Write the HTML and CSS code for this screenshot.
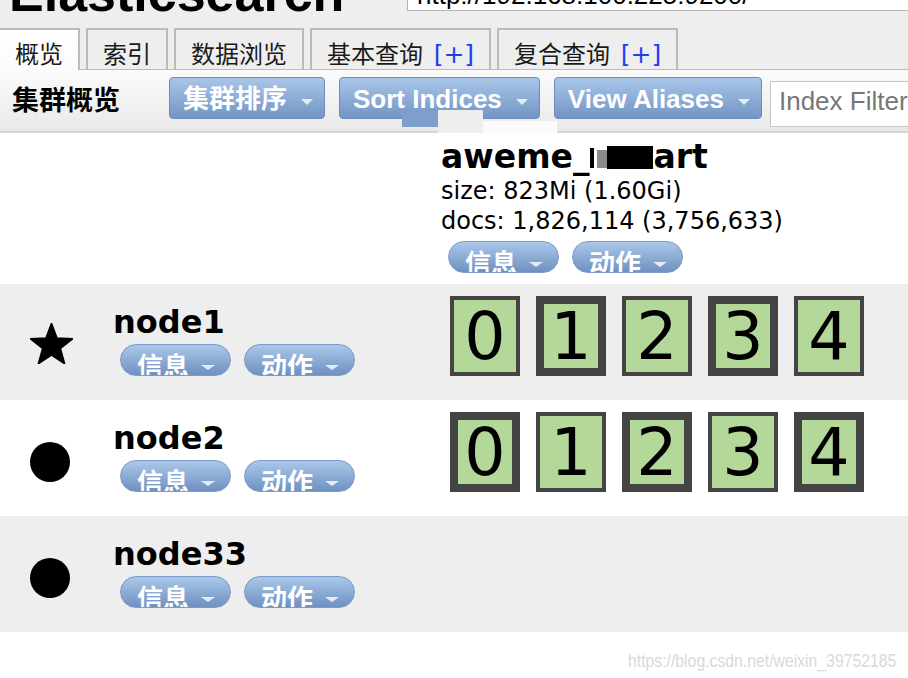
FILE: index.html
```html
<!DOCTYPE html>
<html lang="zh">
<head>
<meta charset="utf-8">
<title>Elasticsearch Head</title>
<link rel="stylesheet" href="styles.css">
</head>
<body>
<div class="app">
  <header class="top">
    <h1 class="title">Elasticsearch</h1>
    <div class="cluster-url">http://192.168.100.225:9200/</div>
  </header>

  <nav class="tabs">
    <div class="tab active">概览</div>
    <div class="tab">索引</div>
    <div class="tab">数据浏览</div>
    <div class="tab">基本查询 <span class="plus">[+]</span></div>
    <div class="tab">复合查询 <span class="plus">[+]</span></div>
  </nav>

  <div class="toolbar">
    <h2 class="toolbar-title">集群概览</h2>
    <button class="btn">集群排序<span class="caret"></span></button>
    <button class="btn">Sort Indices<span class="caret"></span></button>
    <button class="btn btn-last">View Aliases<span class="caret"></span></button>
    <input class="filter" type="text" placeholder="Index Filter">
  </div>

  <div class="overview">
    <div class="row head">
      <div class="node-cell"></div>
      <div class="index-cell">
        <div class="index-name">aweme_<span class="redact bar"></span><span class="redact grey"></span><span class="redact block"></span>art</div>
        <div class="index-meta">size: 823Mi (1.60Gi)</div>
        <div class="index-meta">docs: 1,826,114 (3,756,633)</div>
        <div class="pills">
          <span class="pill">信息<span class="caret"></span></span>
          <span class="pill">动作<span class="caret"></span></span>
        </div>
      </div>
    </div>

    <div class="row shaded">
      <div class="node-cell">
        <div class="node-icon">
          <svg class="star" viewBox="2.45 3 95.1 90.45" aria-label="master">
            <polygon points="50,3 62.34,36.01 97.55,37.55 69.97,59.49 79.39,93.45 50,74 20.61,93.45 30.03,59.49 2.45,37.55 37.66,36.01" fill="#000" stroke="#000" stroke-width="3" stroke-linejoin="round"/>
          </svg>
        </div>
        <div class="node-info">
          <div class="node-name">node1</div>
          <div class="pills">
            <span class="pill">信息<span class="caret"></span></span>
            <span class="pill">动作<span class="caret"></span></span>
          </div>
        </div>
      </div>
      <div class="index-cell">
        <div class="shards">
          <div class="shard">0</div>
          <div class="shard primary">1</div>
          <div class="shard">2</div>
          <div class="shard primary">3</div>
          <div class="shard">4</div>
        </div>
      </div>
    </div>

    <div class="row">
      <div class="node-cell">
        <div class="node-icon"><div class="dot"></div></div>
        <div class="node-info">
          <div class="node-name">node2</div>
          <div class="pills">
            <span class="pill">信息<span class="caret"></span></span>
            <span class="pill">动作<span class="caret"></span></span>
          </div>
        </div>
      </div>
      <div class="index-cell">
        <div class="shards">
          <div class="shard primary">0</div>
          <div class="shard">1</div>
          <div class="shard primary">2</div>
          <div class="shard">3</div>
          <div class="shard primary">4</div>
        </div>
      </div>
    </div>

    <div class="row shaded">
      <div class="node-cell">
        <div class="node-icon"><div class="dot"></div></div>
        <div class="node-info">
          <div class="node-name">node33</div>
          <div class="pills">
            <span class="pill">信息<span class="caret"></span></span>
            <span class="pill">动作<span class="caret"></span></span>
          </div>
        </div>
      </div>
      <div class="index-cell"></div>
    </div>
  </div>

  <div class="mask mask-blue"></div>
  <div class="mask mask-grey"></div>
  <div class="mask mask-white"></div>

  <div class="watermark">https://blog.csdn.net/weixin_39752185</div>
</div>
</body>
</html>
```

FILE: styles.css
```css
html, body {
  margin: 0;
  padding: 0;
  background: #fff;
}

body {
  font-family: "DejaVu Sans", "Noto Sans CJK SC", sans-serif;
  color: #000;
  overflow: hidden;
}

.app {
  position: relative;
  width: 908px;
  height: 678px;
  overflow: hidden;
}

/* ---------- top header ---------- */
.top {
  display: flex;
  align-items: flex-start;
  height: 28px;
  background: #eee;
}

.title {
  flex: none;
  width: 398px;
  margin: -33px 0 0 9px;
  font: bold 52px/52px "Liberation Sans", sans-serif;
  white-space: nowrap;
}

.cluster-url {
  flex: none;
  width: 520px;
  height: 41px;
  margin-top: -30px;
  box-sizing: border-box;
  padding: 9px 0 0 9px;
  border: 1px solid #b4b4b4;
  background: #fff;
  font: 26px/30px "Liberation Sans", sans-serif;
  white-space: nowrap;
}

/* ---------- tabs ---------- */
.tabs {
  display: flex;
  align-items: flex-end;
  gap: 6px;
  background: #eee;
  border-bottom: 1px solid #bbb;
}

.tab {
  flex: none;
  padding: 13px 15px 2px;
  border: 2px solid #bbb;
  border-bottom: 0;
  background: #eee;
  font-size: 24px;
  line-height: 24px;
  color: #1a1a1a;
  white-space: nowrap;
}

.tab.active {
  margin-left: -2px;
  margin-bottom: -1px;
  padding-bottom: 3px;
  background: linear-gradient(#fff, #fbfbfb);
}

.plus {
  margin-left: 3px;
  font-size: 25px;
  color: #1c3ef0;
}

/* ---------- toolbar ---------- */
.toolbar {
  display: flex;
  align-items: flex-start;
  height: 63px;
  box-sizing: border-box;
  padding-top: 7px;
  background: linear-gradient(#fbfbfb, #e9e9e9);
  border-bottom: 2px solid #d6d6d6;
  white-space: nowrap;
  overflow: hidden;
}

.toolbar-title {
  flex: none;
  margin: 7px 49px 0 12px;
  font: bold 27px/30px "Noto Sans CJK SC", sans-serif;
}

.btn {
  flex: none;
  display: flex;
  align-items: center;
  gap: 14px;
  height: 42px;
  box-sizing: border-box;
  margin: 0 14px 0 0;
  padding: 2px 11px 0 13px;
  border: 1px solid #6d8dbf;
  border-radius: 4px;
  background: linear-gradient(#a8c6e8, #7395c5);
  color: #fff;
  font: bold 26px/26px "Liberation Sans", "Noto Sans CJK SC", sans-serif;
}

.btn-last {
  margin-right: 8px;
}

.caret {
  flex: none;
  width: 0;
  height: 0;
  border-left: 6px solid transparent;
  border-right: 6px solid transparent;
  border-top: 6px solid #e4ebf6;
}

.btn .caret {
  margin-top: 5px;
}

.filter {
  flex: none;
  width: 220px;
  height: 46px;
  margin: 4px 0 0;
  box-sizing: border-box;
  padding: 0 0 6px 8px;
  border: 1px solid #c6c6c6;
  background: #fff;
  font: 26px "Liberation Sans", sans-serif;
  color: #000;
  outline: none;
}

.filter::placeholder {
  color: #777;
}

/* ---------- cluster overview ---------- */
.row {
  display: flex;
  height: 116px;
  box-sizing: border-box;
  padding: 12px 0 24px;
}

.row.head {
  height: 151px;
  padding: 5px 0 10px;
}

.row.shaded {
  background: #eee;
}

.node-cell {
  flex: none;
  width: 440px;
  display: flex;
}

.node-icon {
  flex: none;
  width: 113px;
  box-sizing: border-box;
  padding-left: 30px;
}

.star {
  display: block;
  width: 43px;
  height: 41px;
  margin-top: 27px;
}

.dot {
  width: 40px;
  height: 40px;
  margin-top: 30px;
  border-radius: 50%;
  background: #000;
}

.node-info {
  display: flex;
  flex-direction: column;
  justify-content: flex-end;
}

.node-name {
  margin-bottom: 4px;
  font: bold 32px/36px "DejaVu Sans", sans-serif;
}

.pills {
  display: flex;
  gap: 13px;
  margin-left: 7px;
}

.pill {
  flex: none;
  display: flex;
  align-items: flex-start;
  gap: 12px;
  height: 32px;
  box-sizing: border-box;
  padding: 7px 15px 0 16px;
  border: 1px solid #7a9bcb;
  border-radius: 16px;
  background: linear-gradient(#aac8e9, #6f91c1);
  color: #fff;
  font: bold 26px/26px "Noto Sans CJK SC", sans-serif;
  overflow: hidden;
}

.pill .caret {
  margin-top: 13px;
  border-left-width: 7px;
  border-right-width: 7px;
  border-top-width: 5px;
}

.index-cell {
  flex: 1;
  min-width: 0;
}

.index-name {
  padding-left: 1px;
  font: bold 33px/38px "DejaVu Sans", sans-serif;
  white-space: nowrap;
}

.redact {
  display: inline-block;
  vertical-align: baseline;
}

.redact.bar {
  width: 4px;
  height: 20px;
  margin-left: 1px;
  background: #000;
}

.redact.grey {
  width: 10px;
  height: 18px;
  margin-left: 3px;
  background: #8a8a8a;
}

.redact.block {
  width: 46px;
  height: 23px;
  margin-bottom: -1px;
  background: #000;
}

.index-meta {
  padding-left: 1px;
  font: 24px/30px "DejaVu Sans", sans-serif;
  white-space: nowrap;
}

.index-cell .pills {
  margin-top: 5px;
  margin-left: 8px;
}

.shards {
  display: flex;
  gap: 16px;
  margin-left: 10px;
}

.shard {
  flex: none;
  display: flex;
  align-items: center;
  justify-content: center;
  width: 70px;
  height: 80px;
  box-sizing: border-box;
  border: 4px solid #444;
  background: #b4d89a;
  font: 65px/65px "DejaVu Sans", sans-serif;
}

.shard.primary {
  border-width: 8px;
}

/* ---------- screenshot artefacts over the toolbar ---------- */
.mask {
  position: absolute;
}

.mask-blue {
  left: 402px;
  top: 112px;
  width: 36px;
  height: 15px;
  background: #7e9ecb;
}

.mask-grey {
  left: 438px;
  top: 110px;
  width: 45px;
  height: 23px;
  background: #eeeeee;
}

.mask-white {
  left: 483px;
  top: 121px;
  width: 74px;
  height: 12px;
  background: #fbfbfb;
}

.watermark {
  position: absolute;
  left: 628px;
  top: 651px;
  font: 19px/20px "Liberation Sans", sans-serif;
  color: #d9d9d9;
  white-space: nowrap;
  transform: scaleX(0.83);
  transform-origin: left top;
}
```
